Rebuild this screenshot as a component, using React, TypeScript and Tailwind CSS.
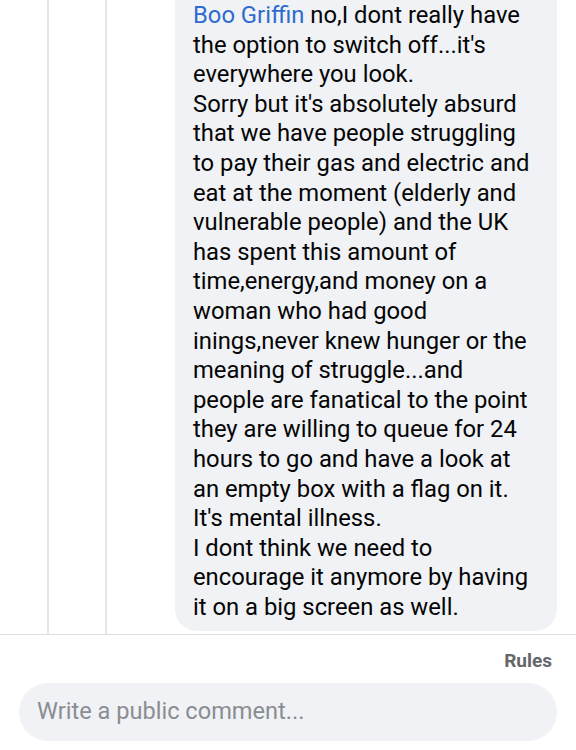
const lines = [
  "the option to switch off...it's",
  "everywhere you look.",
  "Sorry but it's absolutely absurd",
  "that we have people struggling",
  "to pay their gas and electric and",
  "eat at the moment (elderly and",
  "vulnerable people) and the UK",
  "has spent this amount of",
  "time,energy,and money on a",
  "woman who had good",
  "inings,never knew hunger or the",
  "meaning of struggle...and",
  "people are fanatical to the point",
  "they are willing to queue for 24",
  "hours to go and have a look at",
  "an empty box with a flag on it.",
  "It's mental illness.",
  "I dont think we need to",
  "encourage it anymore by having",
  "it on a big screen as well.",
];

export default function App() {
  return (
    <div className="w-[576px] h-[750px] overflow-hidden bg-white font-['Roboto',sans-serif]">
      {/* Thread */}
      <div className="flex h-[634px]">
        <div className="w-[47px] shrink-0" />
        <div className="w-[2px] shrink-0 bg-[#e4e6eb]" />
        <div className="w-[56px] shrink-0" />
        <div className="w-[2px] shrink-0 bg-[#e4e6eb]" />
        <div className="w-[68px] shrink-0" />
        <div className="w-[382px] shrink-0 self-start -mt-[20px] rounded-[22px] bg-[#f0f2f5] pl-[18px] pt-[21px] pb-[9px] text-[23.8px] leading-[29.6px] text-[#050505] whitespace-nowrap">
          <div>
            <span className="text-[#2f6bcf]">Boo Griffin</span> no,I dont really have
          </div>
          {lines.map((l, i) => (
            <div key={i}>{l}</div>
          ))}
        </div>
      </div>

      <div className="h-px bg-[#dadde1]" />

      {/* Footer */}
      <div className="flex justify-end pr-[24px] pt-[12px]">
        <span className="text-[19px] font-bold text-[#65676b]">Rules</span>
      </div>
      <div className="mx-[19px] mt-[7px] h-[58px] rounded-full bg-[#f0f2f5] flex items-center pl-[18px]">
        <span className="text-[23.6px] text-[#8a8d91]">Write a public comment...</span>
      </div>
    </div>
  );
}
